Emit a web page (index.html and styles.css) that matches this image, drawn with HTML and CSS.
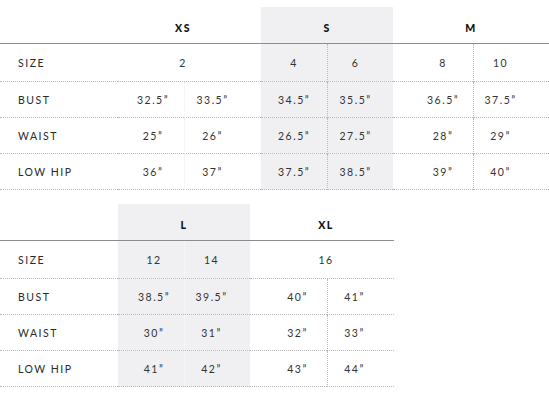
FILE: index.html
```html
<!DOCTYPE html>
<html>
<head>
<meta charset="utf-8">
<link rel="stylesheet" href="styles.css">
</head>
<body>
<table class="chart t1">
  <colgroup>
    <col class="c-label"><col class="w66"><col class="w77"><col class="w66"><col class="w66"><col class="w80"><col class="w76">
  </colgroup>
  <thead>
    <tr class="head">
      <th class="label"></th>
      <th colspan="2" class="xs-h">XS</th>
      <th colspan="2" class="hl">S</th>
      <th colspan="2">M</th>
    </tr>
  </thead>
  <tbody>
    <tr class="r1">
      <td class="label">SIZE</td>
      <td colspan="2" class="xs-h">2</td>
      <td class="hl s-l">4</td><td class="hl s-r dv">6</td>
      <td class="m-l">8</td><td class="m-r dv">10</td>
    </tr>
    <tr>
      <td class="label">BUST</td>
      <td class="xs-l">32.5”</td><td class="xs-r dv faint">33.5”</td>
      <td class="hl s-l">34.5”</td><td class="hl s-r dv">35.5”</td>
      <td class="m-l">36.5”</td><td class="m-r dv">37.5”</td>
    </tr>
    <tr>
      <td class="label">WAIST</td>
      <td class="xs-l">25”</td><td class="xs-r dv faint">26”</td>
      <td class="hl s-l">26.5”</td><td class="hl s-r dv">27.5”</td>
      <td class="m-l">28”</td><td class="m-r dv">29”</td>
    </tr>
    <tr>
      <td class="label">LOW HIP</td>
      <td class="xs-l">36”</td><td class="xs-r dv faint">37”</td>
      <td class="hl s-l">37.5”</td><td class="hl s-r dv">38.5”</td>
      <td class="m-l">39”</td><td class="m-r dv">40”</td>
    </tr>
  </tbody>
</table>

<table class="chart t2">
  <colgroup>
    <col class="c-label"><col class="w66"><col class="w66"><col class="w77"><col class="w67">
  </colgroup>
  <thead>
    <tr class="head">
      <th class="label"></th>
      <th colspan="2" class="hl">L</th>
      <th colspan="2" class="xl-h">XL</th>
    </tr>
  </thead>
  <tbody>
    <tr class="r1">
      <td class="label">SIZE</td>
      <td class="hl l-l">12</td><td class="hl l-r dv faint-hl">14</td>
      <td colspan="2" class="xl-h">16</td>
    </tr>
    <tr>
      <td class="label">BUST</td>
      <td class="hl l-l">38.5”</td><td class="hl l-r dv faint-hl">39.5”</td>
      <td class="xl-l">40”</td><td class="xl-r dv">41”</td>
    </tr>
    <tr>
      <td class="label">WAIST</td>
      <td class="hl l-l">30”</td><td class="hl l-r dv faint-hl">31”</td>
      <td class="xl-l">32”</td><td class="xl-r dv">33”</td>
    </tr>
    <tr>
      <td class="label">LOW HIP</td>
      <td class="hl l-l">41”</td><td class="hl l-r dv faint-hl">42”</td>
      <td class="xl-l">43”</td><td class="xl-r dv">44”</td>
    </tr>
  </tbody>
</table>
</body>
</html>
```

FILE: styles.css
```css
html, body {
  margin: 0;
  padding: 0;
  background: #ffffff;
}
body {
  padding-top: 7px;
  font-family: "Lato", "Liberation Sans", sans-serif;
  font-size: 10.5px;
  color: #333333;
}
.chart {
  table-layout: fixed;
  border-collapse: separate;
  border-spacing: 0;
}
.t1 { width: 549px; margin-bottom: 14px; }
.t2 { width: 394px; }
.c-label { width: 118px; }
.w66 { width: 66px; }
.w67 { width: 67px; }
.w76 { width: 76px; }
.w77 { width: 77px; }
.w80 { width: 80px; }

.chart th, .chart td {
  padding: 0;
  text-align: center;
  vertical-align: middle;
  letter-spacing: 1.5px;
  white-space: nowrap;
}
.chart th {
  height: 37px;
  padding-top: 6px;
  box-sizing: border-box;
  border-bottom: 1px solid #8c8c8c;
  font-weight: 900;
  color: #111;
  font-size: 10.5px;
}
.chart td {
  height: 35px;
  border-bottom: 1px dotted #b9b9b9;
}
.chart tr.r1 td { height: 37px; }
.chart .label {
  text-align: left;
  padding-left: 18px;
  color: #2a2a2a;
  letter-spacing: 1.5px;
}
.hl { background: #f0f0f2; }
.dv { border-left: 1px dotted #b9b9b9; }
.dv.faint { border-left-color: #ececec; }
.dv.faint-hl { border-left-color: #fbfbfb; }

.xs-h { padding-right: 13px !important; }
.xl-h { padding-left: 8px !important; }
.xs-l { padding-left: 4px !important; }
.xs-r { padding-right: 21px !important; }
.s-r { padding-right: 10px !important; }
.m-l { padding-left: 20px !important; }
.m-r { padding-right: 22px !important; }
.l-l { padding-left: 6px !important; }
.l-r { padding-right: 12px !important; }
.xl-l { padding-left: 18px !important; }
.xl-r { padding-right: 13px !important; }
```
